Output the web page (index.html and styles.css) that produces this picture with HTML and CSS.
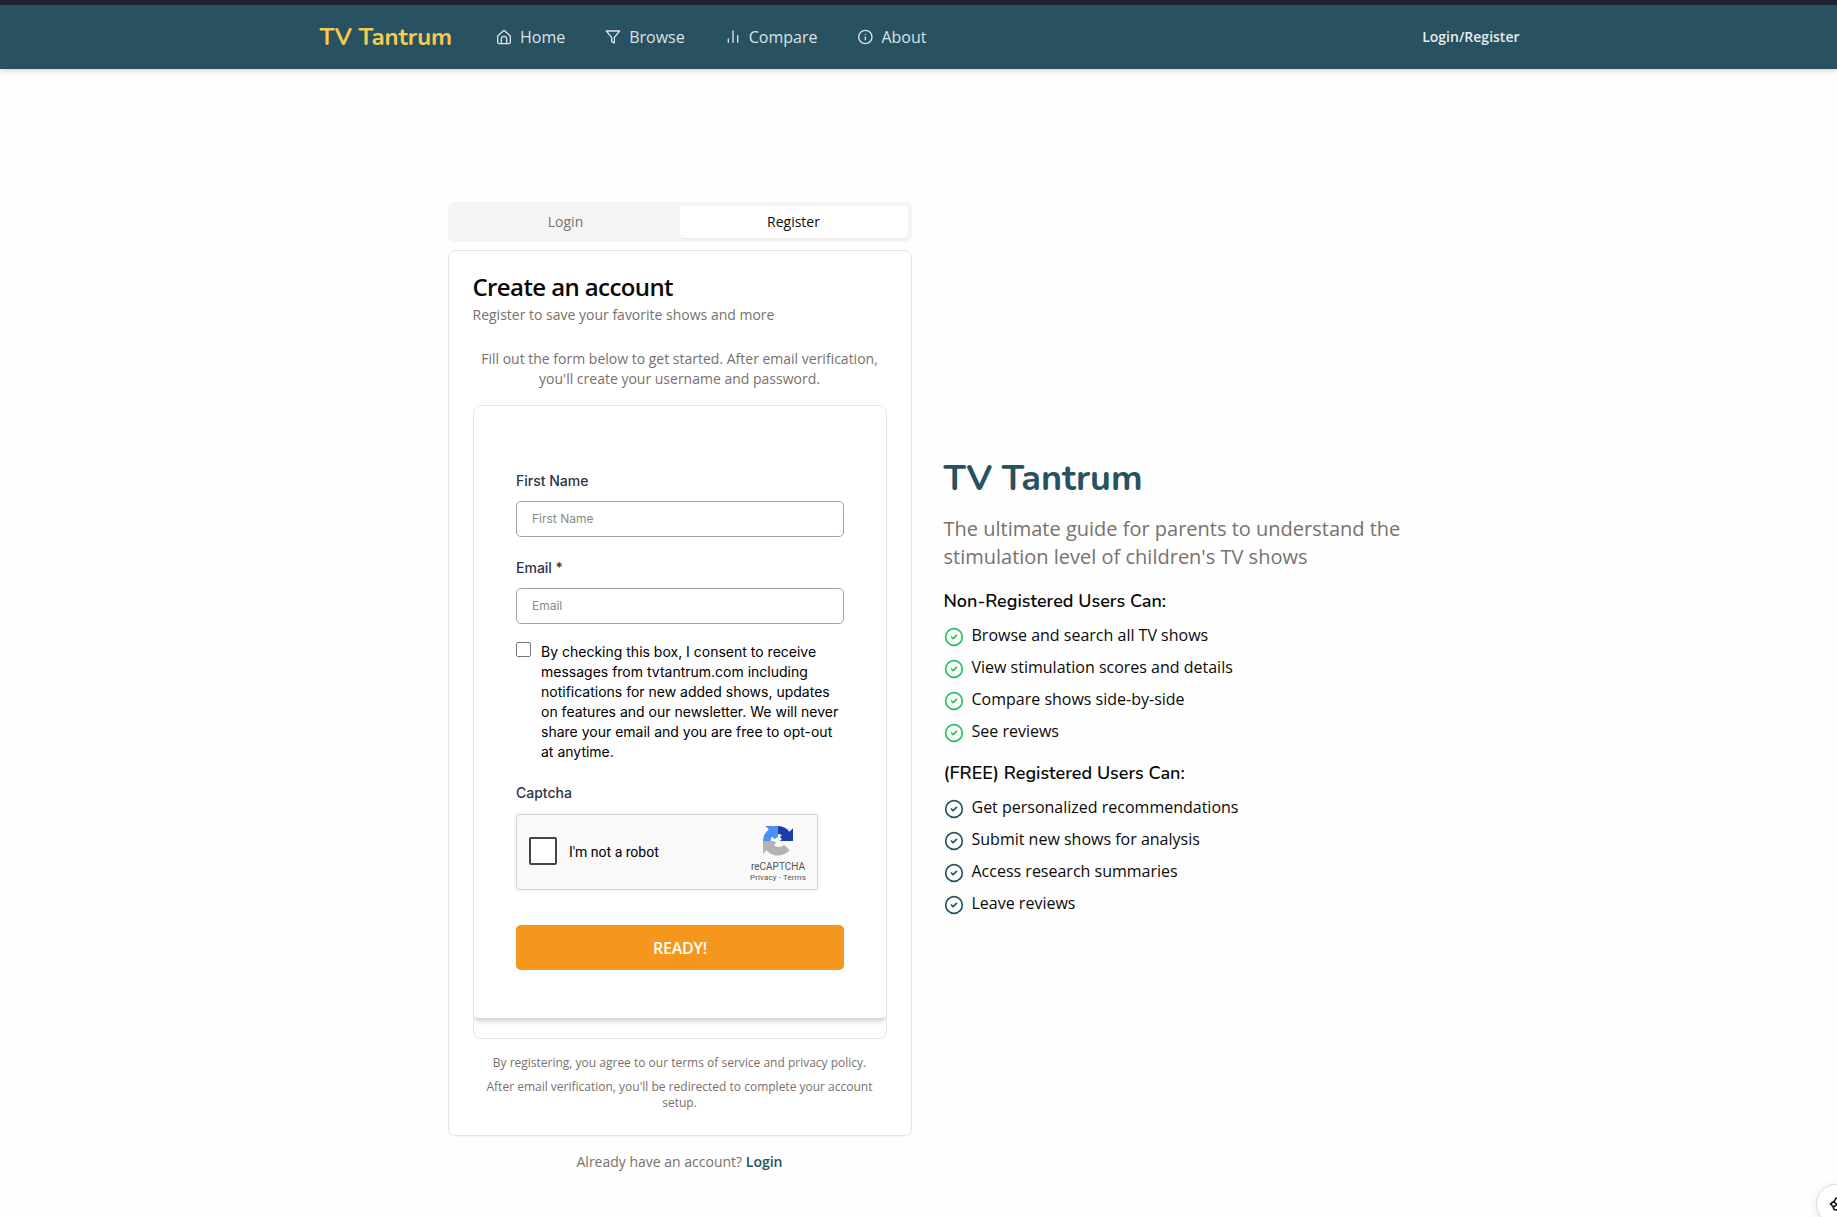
FILE: index.html
```html
<!DOCTYPE html>
<html lang="en">
<head>
<meta charset="utf-8">
<title>TV Tantrum</title>
<link rel="stylesheet" href="styles.css">
</head>
<body>
<svg class="defs" aria-hidden="true">
  <symbol id="check" viewBox="0 0 24 24"><circle cx="12" cy="12" r="10"/><path d="m9 12 2 2 4-4"/></symbol>
</svg>
<header class="header">
  <div class="header-inner">
    <a class="brand">TV Tantrum</a>
    <nav class="nav">
      <a><svg class="icon" viewBox="0 0 24 24"><path d="M2.500 10.500 12 2l9.500 8.500V20a2 2 0 0 1-2 2h-15a2 2 0 0 1-2-2z"/><path d="M8 22v-7a4 4 0 0 1 8 0v7"/></svg><span>Home</span></a>
      <a><svg class="icon" viewBox="0 0 24 24"><path d="M22 3H2l8 9.460V19l4 2v-8.540z"/></svg><span>Browse</span></a>
      <a><svg class="icon" viewBox="0 0 24 24"><path d="M12 20V3M19 20V10M5 20v-5"/></svg><span>Compare</span></a>
      <a><svg class="icon" viewBox="0 0 24 24"><circle cx="12.5" cy="12" r="10"/><path d="M12.500 16v-4M12.500 8h.01"/></svg><span>About</span></a>
    </nav>
    <a class="login-link">Login/Register</a>
  </div>
</header>
<main class="main">
  <section class="auth">
    <div class="tabs"><button class="tab">Login</button><button class="tab active">Register</button></div>
    <div class="card">
      <h3 class="card-title">Create an account</h3>
      <p class="card-sub">Register to save your favorite shows and more</p>
      <p class="intro">Fill out the form below to get started. After email verification, you'll create your username and password.</p>
      <div class="frame">
        <form class="form">
          <label class="label" for="first">First Name</label>
          <input class="input" id="first" placeholder="First Name">
          <label class="label" for="email">Email *</label>
          <input class="input" id="email" placeholder="Email">
          <div class="consent">
            <span class="box"></span>
            <p class="consent-text">By checking this box, I consent to receive<br>messages from tvtantrum.com including<br>notifications for new added shows, updates<br>on features and our newsletter. We will never<br>share your email and you are free to opt-out<br>at anytime.</p>
          </div>
          <span class="label captcha-label">Captcha</span>
          <div class="captcha">
            <span class="captcha-box"></span>
            <span class="captcha-text">I'm not a robot</span>
            <div class="captcha-brand">
              <svg class="captcha-logo" viewBox="0 0 64 64">
                <path fill="#1c3aa9" d="M64 32V5l-7.500 7.500A32 32 0 0 0 32 0v17c4 0 6 1 8 3l-4 4a10 10 0 0 1 4 4l-4 4z"/>
                <path fill="#4a90f5" d="M32 0H5l7.500 7.500A32 32 0 0 0 0 32h16c0-4 1-7 4-9l5 5a10 10 0 0 1 7-4z"/>
                <path fill="#b3b3b3" d="M0 32v27l7.500-7.500A32 32 0 0 0 57 51L45 40a16 16 0 0 1-22 1l5-5-5-4z"/>
              </svg>
              <span class="captcha-name">reCAPTCHA</span>
              <span class="captcha-legal">Privacy - Terms</span>
            </div>
          </div>
          <button class="submit" type="button">READY!</button>
        </form>
      </div>
      <p class="note">By registering, you agree to our terms of service and privacy policy.</p>
      <p class="note">After email verification, you'll be redirected to complete your account setup.</p>
    </div>
    <p class="switch">Already have an account? <a>Login</a></p>
  </section>
  <section class="about">
    <h1 class="title">TV Tantrum</h1>
    <p class="lead">The ultimate guide for parents to understand the stimulation level of children's TV shows</p>
    <h2 class="group">Non-Registered Users Can:</h2>
    <ul class="list green">
      <li><svg class="check"><use href="#check"/></svg><span>Browse and search all TV shows</span></li>
      <li><svg class="check"><use href="#check"/></svg><span>View stimulation scores and details</span></li>
      <li><svg class="check"><use href="#check"/></svg><span>Compare shows side-by-side</span></li>
      <li><svg class="check"><use href="#check"/></svg><span>See reviews</span></li>
    </ul>
    <h2 class="group free">(FREE) Registered Users Can:</h2>
    <ul class="list teal">
      <li><svg class="check"><use href="#check"/></svg><span>Get personalized recommendations</span></li>
      <li><svg class="check"><use href="#check"/></svg><span>Submit new shows for analysis</span></li>
      <li><svg class="check"><use href="#check"/></svg><span>Access research summaries</span></li>
      <li><svg class="check"><use href="#check"/></svg><span>Leave reviews</span></li>
    </ul>
  </section>
</main>
<div class="fab"><svg viewBox="0 0 18 18"><path d="M1.500 9 5.500 6 7 3l4 1 3-2 2 7-5 2-3 4-3-.500-1-3zM5 7l3 2.500L4.500 12M8 9.500l4-3"/></svg></div>
</body>
</html>
```
FILE: styles.css
```css
* { box-sizing: border-box; margin: 0; padding: 0; }
body { height: 1217px; overflow: hidden; position: relative; background: #fefefe; font-family: "Open Sans", sans-serif; color: #0c0a09; font-size: 16px; line-height: 24px; }
.defs { position: absolute; width: 0; height: 0; }
.header { height: 69px; background: #285161; border-top: 5px solid #1f2233; box-shadow: 0 2px 5px rgba(0,0,0,.16); }
.header-inner { height: 64px; margin: 0 317.5px 0 319.5px; display: flex; align-items: center; }
.brand { font: 700 24px/32px "Nunito", "Open Sans", sans-serif; color: #f6c94f; width: 176.5px; white-space: nowrap; }
.nav { display: flex; flex: 1; gap: 40px; color: #dbe3e6; }
.nav a { display: flex; align-items: center; gap: 8px; }
.icon { width: 16px; height: 16px; fill: none; stroke: currentColor; stroke-width: 2; stroke-linecap: round; stroke-linejoin: round; overflow: visible; }
.login-link { font-size: 14px; font-weight: 600; color: #e6ecee; }
.main { display: grid; grid-template-columns: 464px 462px; gap: 32px; padding: 133px 0 0 447.5px; align-items: center; }
.tabs { display: flex; height: 40px; padding: 4px; background: #f5f5f4; border-radius: 6px; }
.tab { flex: 1; border: 0; background: none; border-radius: 4px; font: 400 14px/20px "Open Sans", sans-serif; color: #78716c; }
.tab.active { background: #fff; color: #0c0a09; box-shadow: 0 1px 2px rgba(0,0,0,.06); }
.card { height: 886px; margin-top: 8px; border: 1px solid #e5e5e5; border-radius: 8px; padding: 24px; background: #fff; box-shadow: 0 1px 2px rgba(0,0,0,.05); }
.card-title { font-size: 24px; line-height: 24px; font-weight: 600; letter-spacing: -.6px; }
.card-sub { margin-top: 6px; font-size: 14px; line-height: 20px; color: #78716c; }
.intro { margin-top: 24px; font-size: 14px; line-height: 20px; color: #78716c; text-align: center; }
.frame { height: 634px; margin: 16px 0 8px; border: 1px solid #e5e5e5; border-radius: 8px; overflow: hidden; }
.frame + .note { margin-top: 16px; }
.form { height: 612px; padding: 65px 41.5px 0 42.5px; background: #fff; border-radius: 4px; box-shadow: 0 3px 5px rgba(45,50,90,.25); font-family: Inter, sans-serif; display: flex; flex-direction: column; }
.label { font-size: 14px; line-height: 20px; font-weight: 500; color: #2d3348; }
.input { height: 36px; margin: 10px 0 21px; border: 1px solid #a3a3a3; border-radius: 5px; padding: 0 15px 1px; font: 12px Inter, sans-serif; background: #fff; }
.input::placeholder { color: #8a8a8a; }
.consent { display: flex; gap: 10px; margin-top: -3px; color: #000; }
.box { width: 15px; height: 15px; flex: none; border: 1px solid #767676; border-radius: 2px; }
.consent-text { font-size: 14px; line-height: 20px; white-space: nowrap; }
.captcha-label { margin-top: 21px; }
.captcha { width: 302px; height: 76px; margin-top: 11px; display: flex; align-items: center; border: 1px solid #d3d3d3; border-radius: 3px; background: #f9f9f9; box-shadow: 0 0 4px 1px rgba(0,0,0,.06); font-family: Roboto, sans-serif; padding-left: 12px; color: #000; }
.captcha-box { width: 28px; height: 28px; border: 2px solid #444; border-radius: 2px; background: #fff; margin: 0 12px 2px 0; }
.captcha-text { font-size: 14px; line-height: 17px; }
.captcha-brand { margin: 5px 9px 0 auto; width: 60px; display: flex; flex-direction: column; align-items: center; color: #555; }
.captcha-logo { width: 30px; height: 30px; margin-bottom: 4px; }
.captcha-name { font-size: 10px; line-height: 13px; }
.captcha-legal { font-size: 8px; line-height: 10px; letter-spacing: .1px; white-space: nowrap; }
.submit { height: 45px; margin-top: 35px; border: 0; border-radius: 5px; background: #f6971d; color: #fff; font: 600 16px "Open Sans", sans-serif; letter-spacing: -.2px; }
.note { margin-top: 8px; font-size: 12px; line-height: 16px; color: #78716c; text-align: center; }
.switch { margin-top: 16px; font-size: 14px; line-height: 20px; color: #78716c; text-align: center; }
.switch a { color: #285161; font-weight: 600; }
.title { font: 700 36px/40px "Nunito", "Open Sans", sans-serif; color: #285161; }
.lead { margin: 16px 0; font-size: 20px; line-height: 28px; color: #78716c; }
.group { font: 600 18px/28px "Nunito", "Open Sans", sans-serif; }
.group.free { margin-top: 16px; }
.list { list-style: none; margin-top: 8px; display: grid; gap: 8px; }
.list li { display: flex; gap: 8px; height: 24px; }
.check { width: 20px; height: 20px; margin-top: 4px; fill: none; stroke: currentColor; stroke-width: 2; stroke-linecap: round; stroke-linejoin: round; }
.green .check { color: #22c55e; }
.teal .check { color: #285161; }
.fab { position: absolute; left: 1816px; top: 1184px; width: 40px; height: 40px; border-radius: 50%; border: 1px solid #ddd; background: #fff; box-shadow: 0 2px 8px rgba(0,0,0,.1); display: flex; align-items: center; justify-content: center; }
.fab svg { width: 18px; height: 18px; margin-left: 4px; fill: none; stroke: #111; stroke-width: 1.6; stroke-linejoin: round; }
```
